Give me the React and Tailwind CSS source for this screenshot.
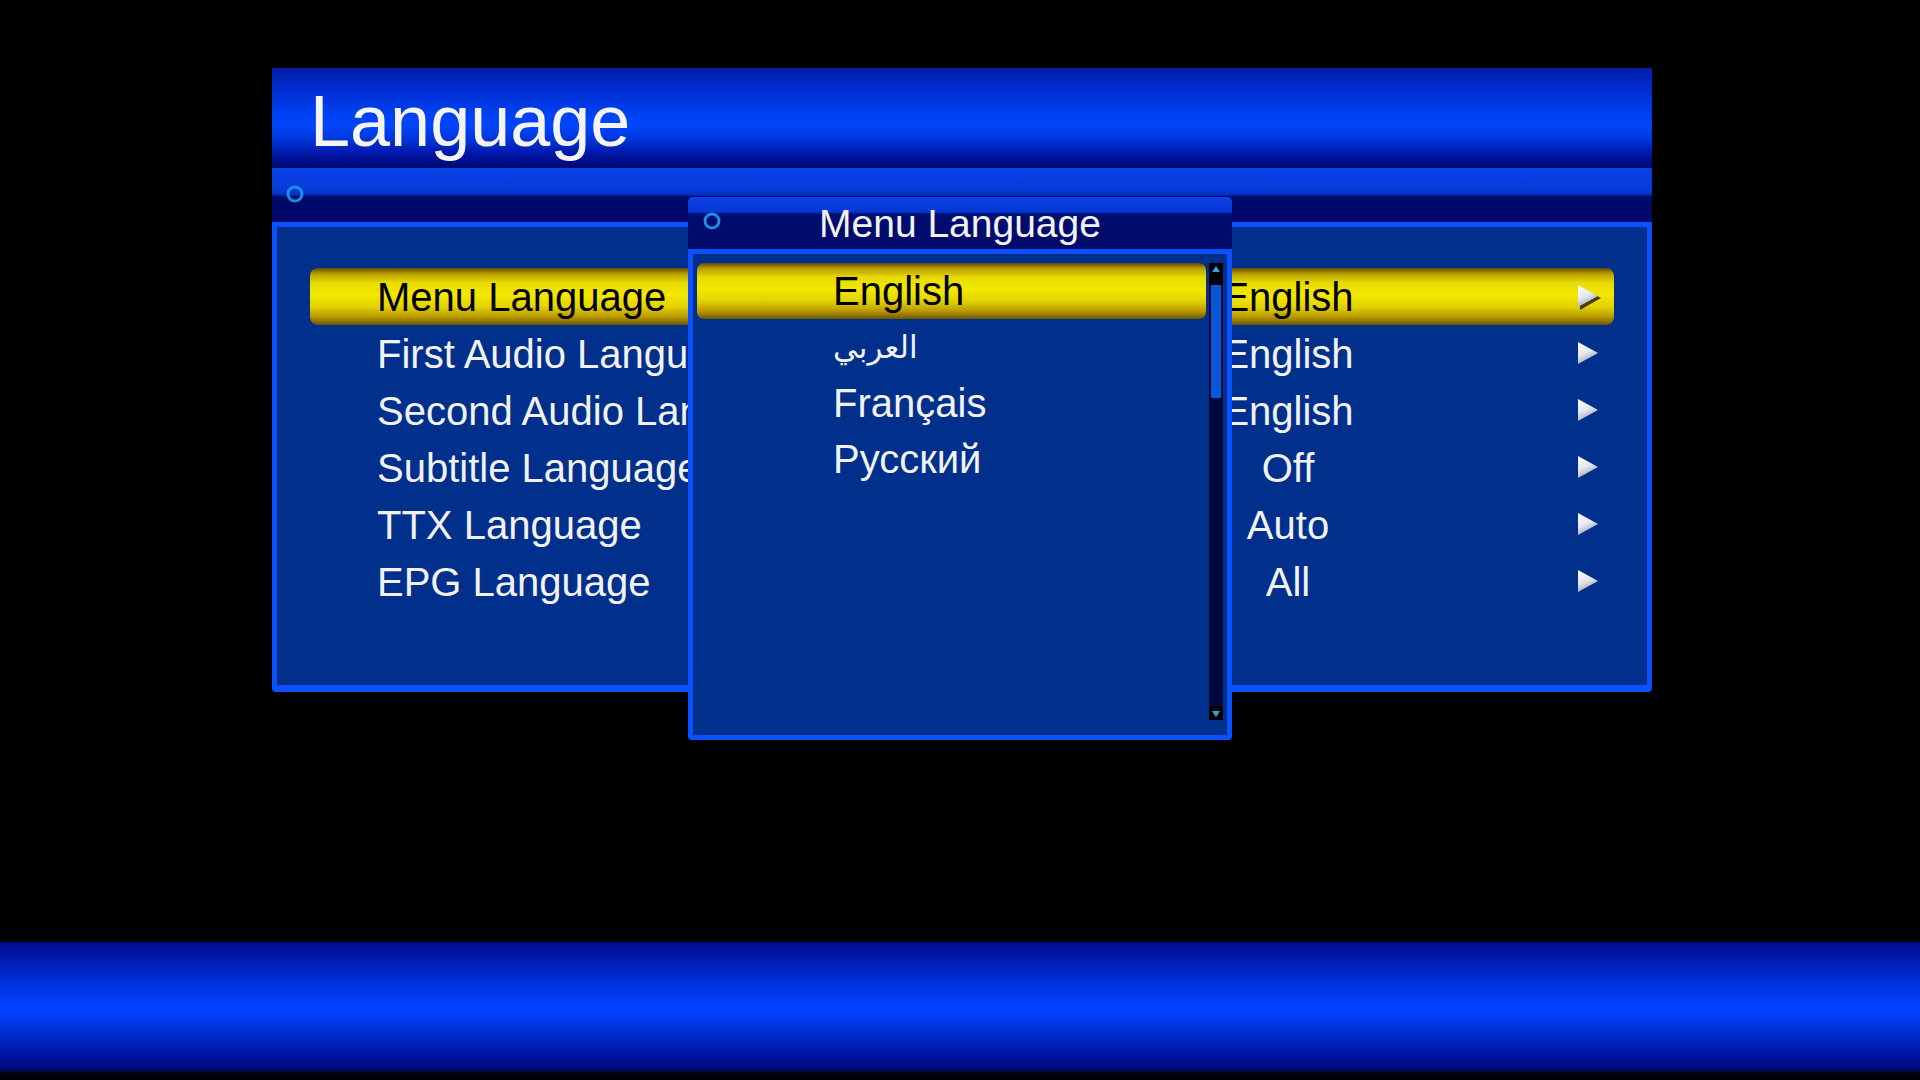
import React from 'react';

const ROWS = [
  { label: 'Menu Language', value: 'English' },
  { label: 'First Audio Language', value: 'English' },
  { label: 'Second Audio Language', value: 'English' },
  { label: 'Subtitle Language', value: 'Off' },
  { label: 'TTX Language', value: 'Auto' },
  { label: 'EPG Language', value: 'All' },
];

const OPTIONS = [
  { text: 'English' },
  { text: 'العربي', arabic: true },
  { text: 'Français' },
  { text: 'Русский' },
];

// yellow focus bar used in both lists
const FOCUS =
  'bg-[linear-gradient(to_bottom,#5e4c00_0%,#b89e00_10%,#e8dc00_26%,#f2e800_48%,#e2d200_68%,#b89800_86%,#6e5600_100%)]';

function Ring() {
  return (
    <svg width="22" height="22" viewBox="0 0 22 22" className="shrink-0">
      <circle cx="11" cy="11" r="7" fill="none" stroke="#1c8ee6" strokeWidth="3" />
    </svg>
  );
}

function Arrow({ focused }) {
  return (
    <svg width="26" height="28" viewBox="0 0 26 28">
      <defs>
        <linearGradient id={focused ? 'arF' : 'ar'} x1="0" y1="0" x2="0.4" y2="1">
          <stop offset="0" stopColor="#ffffff" />
          <stop offset="0.55" stopColor="#e6e8f0" />
          <stop offset="1" stopColor="#9ea2b4" />
        </linearGradient>
      </defs>
      {focused && <polygon points="4,4 25,15 4,27" fill="#2a2200" opacity="0.85" />}
      <polygon points="2,2 22,13 2,24" fill={`url(#${focused ? 'arF' : 'ar'})`} />
    </svg>
  );
}

function ScrollBar() {
  return (
    <div className="flex w-[14px] flex-col bg-[#000a3c]">
      <div className="flex h-[22px] items-start justify-center bg-black pt-[3px]">
        <svg width="8" height="6" viewBox="0 0 8 6">
          <polygon points="4,0 8,6 0,6" fill="#3f9ce8" />
        </svg>
      </div>
      <div className="mx-[2px] h-[113px] bg-[#0a56d6]" />
      <div className="flex-1" />
      <div className="flex h-[14px] items-end justify-center bg-black pb-[3px]">
        <svg width="8" height="6" viewBox="0 0 8 6">
          <polygon points="0,0 8,0 4,6" fill="#3f9ce8" />
        </svg>
      </div>
    </div>
  );
}

function Popup() {
  return (
    <div className="absolute left-[688px] top-[197px] z-10 flex h-[543px] w-[544px] flex-col">
      <div className="relative flex h-[52px] items-center justify-center rounded-t-[5px] bg-[linear-gradient(to_bottom,#0c44ec_0%,#0638d4_28%,#000c70_34%,#000a6a_100%)]">
        <div className="absolute left-[13px] top-[13px]">
          <Ring />
        </div>
        <span className="text-[39px] leading-none text-[#f2f2f2]">Menu Language</span>
      </div>
      <div className="flex flex-1 gap-[3px] rounded-b-[4px] border-[5px] border-[#0a52ff] bg-[#00308c] pb-[15px] pl-[4px] pr-[4px] pt-[9px]">
        <div className="flex flex-1 flex-col">
          {OPTIONS.map((o, i) => (
            <div
              key={o.text}
              className={`flex h-[56px] items-center rounded-[7px] pl-[136px] ${i === 0 ? FOCUS + ' text-black' : 'text-[#f2f2f2]'}`}
            >
              <span className={o.arabic ? "text-[31px] leading-none font-['DejaVu_Sans',sans-serif]" : 'text-[40px] leading-none'}>
                {o.text}
              </span>
            </div>
          ))}
        </div>
        <ScrollBar />
      </div>
    </div>
  );
}

export default function App() {
  return (
    <div className="relative h-[1080px] w-[1920px] overflow-hidden bg-black font-['Liberation_Sans','DejaVu_Sans',Arial,sans-serif]">
      <div className="ml-[272px] w-[1380px] pt-[68px]">
        {/* title bar */}
        <div className="flex h-[100px] items-center pl-[38px] pt-[6px] bg-[linear-gradient(to_bottom,#001ca6_0%,#002ed2_22%,#0042f4_48%,#0046fc_58%,#0034d8_72%,#0012a0_88%,#000a6e_100%)]">
          <h1 className="text-[72px] leading-none text-[#f4f4f4]">Language</h1>
        </div>

        {/* strip under the title */}
        <div className="flex h-[54px] items-start pl-[12px] pt-[15px] bg-[linear-gradient(to_bottom,#0a42e6_0%,#073ad8_40%,#0430b8_50%,#000a6c_52%,#00086a_100%)]">
          <Ring />
        </div>

        {/* settings list */}
        <div className="h-[470px] rounded-b-[4px] border-[5px] border-b-[7px] border-[#0a52ff] bg-[#00308c] px-[33px] pt-[41px]">
          {ROWS.map((r, i) => (
            <div
              key={r.label}
              className={`flex h-[57px] items-center rounded-[8px] pl-[67px] ${i === 0 ? FOCUS + ' text-black' : 'text-[#f2f2f2]'}`}
            >
              <span className="w-[811px] whitespace-nowrap text-[40px] leading-none">{r.label}</span>
              <span className="w-[200px] text-center text-[40px] leading-none">{r.value}</span>
              <span className="ml-[188px] flex items-center">
                <Arrow focused={i === 0} />
              </span>
            </div>
          ))}
        </div>
      </div>

      <Popup />

      {/* bottom band */}
      <div className="mt-[250px] h-[131px] w-full bg-[linear-gradient(to_bottom,#000c8a_0%,#0020bc_18%,#0034e0_34%,#0042fc_48%,#0040f8_56%,#0030d6_68%,#0018a8_84%,#000a7e_96%,#000420_100%)]" />
    </div>
  );
}
